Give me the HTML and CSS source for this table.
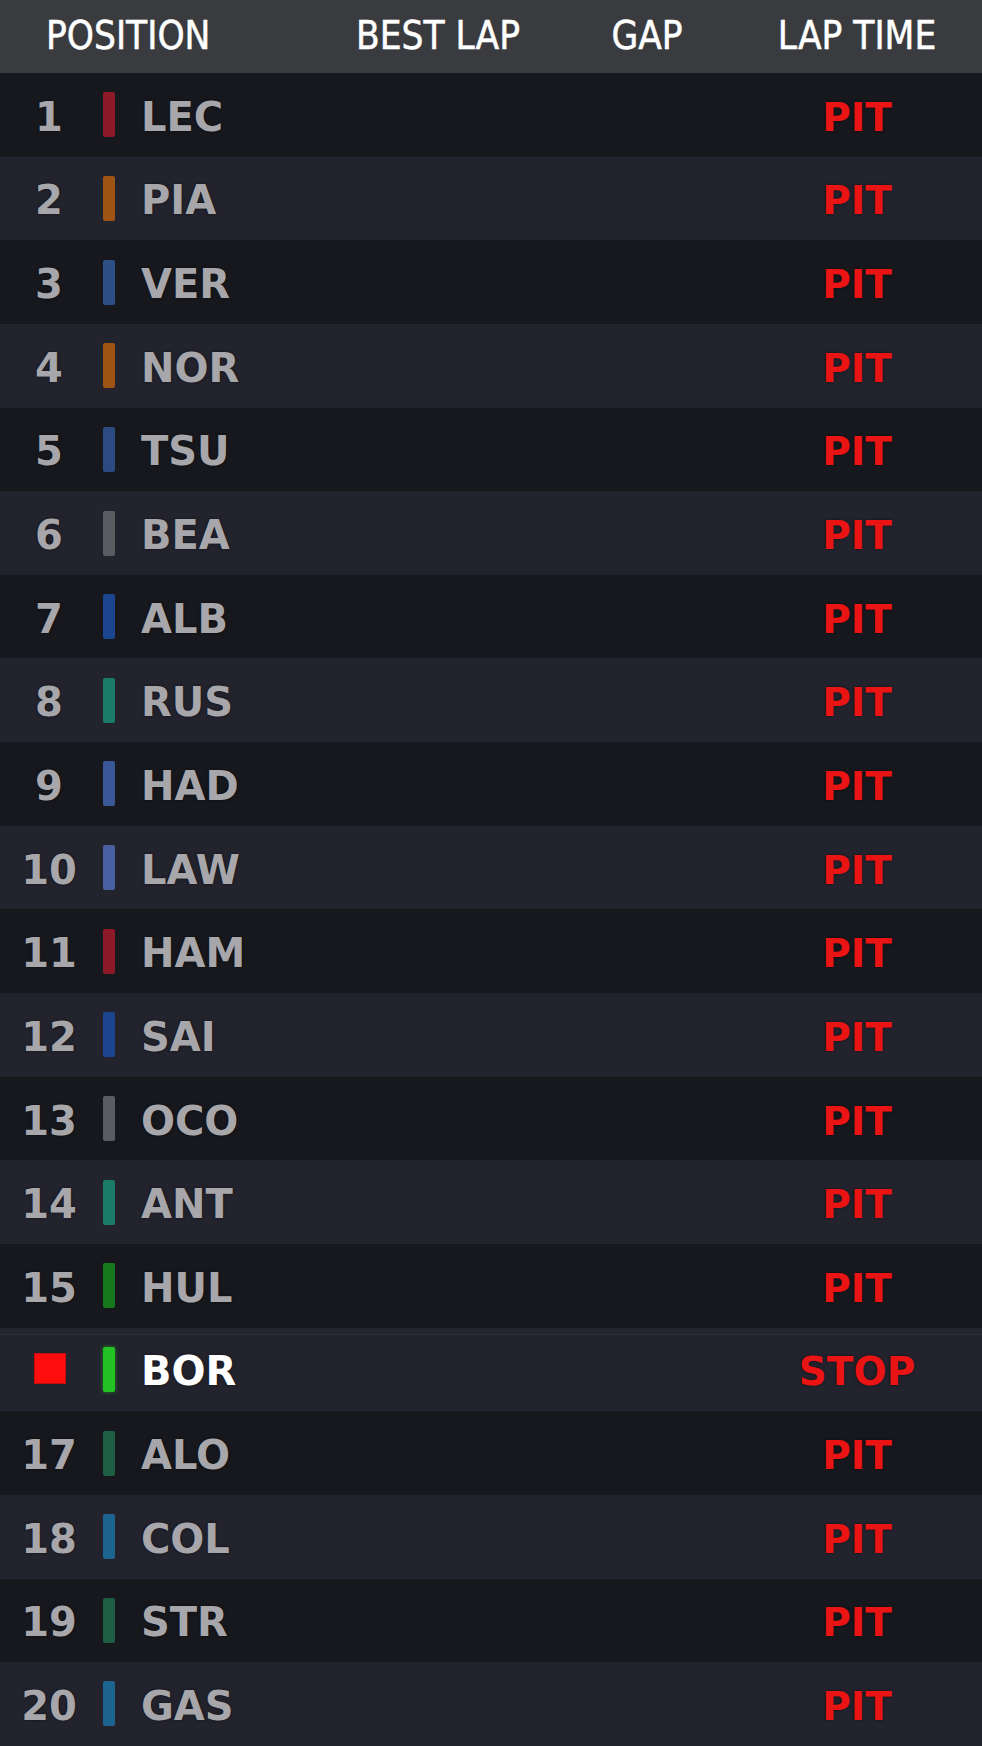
FILE: index.html
```html
<!DOCTYPE html>
<html lang="en">
<head>
<meta charset="utf-8">
<title>Timing</title>
<link rel="stylesheet" href="styles.css">
</head>
<body>
<div class="board">
  <div class="head">
    <span class="h-pos">POSITION</span>
    <span class="h-best">BEST LAP</span>
    <span class="h-gap">GAP</span>
    <span class="h-time">LAP TIME</span>
  </div>
  <div class="row"><span class="pos">1</span><span class="bar t-fer"></span><span class="name">LEC</span><span class="time">PIT</span></div>
  <div class="row"><span class="pos">2</span><span class="bar t-mcl"></span><span class="name">PIA</span><span class="time">PIT</span></div>
  <div class="row"><span class="pos">3</span><span class="bar t-rbr"></span><span class="name">VER</span><span class="time">PIT</span></div>
  <div class="row"><span class="pos">4</span><span class="bar t-mcl"></span><span class="name">NOR</span><span class="time">PIT</span></div>
  <div class="row"><span class="pos">5</span><span class="bar t-rbr2"></span><span class="name">TSU</span><span class="time">PIT</span></div>
  <div class="row"><span class="pos">6</span><span class="bar t-haas"></span><span class="name">BEA</span><span class="time">PIT</span></div>
  <div class="row"><span class="pos">7</span><span class="bar t-wil"></span><span class="name">ALB</span><span class="time">PIT</span></div>
  <div class="row"><span class="pos">8</span><span class="bar t-merc"></span><span class="name">RUS</span><span class="time">PIT</span></div>
  <div class="row"><span class="pos">9</span><span class="bar t-rb"></span><span class="name">HAD</span><span class="time">PIT</span></div>
  <div class="row"><span class="pos">10</span><span class="bar t-rb2"></span><span class="name">LAW</span><span class="time">PIT</span></div>
  <div class="row"><span class="pos">11</span><span class="bar t-fer"></span><span class="name">HAM</span><span class="time">PIT</span></div>
  <div class="row"><span class="pos">12</span><span class="bar t-wil"></span><span class="name">SAI</span><span class="time">PIT</span></div>
  <div class="row"><span class="pos">13</span><span class="bar t-haas"></span><span class="name">OCO</span><span class="time">PIT</span></div>
  <div class="row"><span class="pos">14</span><span class="bar t-merc"></span><span class="name">ANT</span><span class="time">PIT</span></div>
  <div class="row"><span class="pos">15</span><span class="bar t-sau"></span><span class="name">HUL</span><span class="time">PIT</span></div>
  <div class="row active"><span class="pos"><span class="stop-sq"></span></span><span class="bar t-sau-hi"></span><span class="name">BOR</span><span class="time">STOP</span></div>
  <div class="row"><span class="pos">17</span><span class="bar t-am"></span><span class="name">ALO</span><span class="time">PIT</span></div>
  <div class="row"><span class="pos">18</span><span class="bar t-alp"></span><span class="name">COL</span><span class="time">PIT</span></div>
  <div class="row"><span class="pos">19</span><span class="bar t-am"></span><span class="name">STR</span><span class="time">PIT</span></div>
  <div class="row"><span class="pos">20</span><span class="bar t-alp"></span><span class="name">GAS</span><span class="time">PIT</span></div>
</div>
</body>
</html>
```
FILE: styles.css
```css
html, body {
  margin: 0;
  padding: 0;
  background: #17181d;
}
.board {
  width: 982px;
  height: 1746px;
  overflow: hidden;
  display: flex;
  flex-direction: column;
}
.head {
  height: 73px;
  flex: none;
  background: #3a3b3f;
  display: flex;
  align-items: center;
  padding-left: 46px;
  padding-right: 25px;
  color: #ffffff;
  font-family: "DejaVu Sans Condensed", "DejaVu Sans", sans-serif;
  font-stretch: condensed;
  font-size: 38.4px;
  font-weight: normal;
  -webkit-text-stroke: 0.5px #ffffff;
  box-sizing: border-box;
}
.head span {
  padding-bottom: 2px;
  white-space: nowrap;
}
.h-pos { flex: 1; }
.h-best { width: 200px; text-align: center; }
.h-gap { width: 150px; text-align: center; margin-left: 34px; }
.h-time { width: 200px; text-align: center; margin-left: 35px; }

.row {
  height: 83.65px;
  flex: none;
  display: flex;
  align-items: center;
  background: #17181d;
  font-family: "DejaVu Sans", sans-serif;
  font-weight: bold;
  color: #a7a7ab;
}
.row:nth-child(odd) {
  background: #22232d;
}
.row.active {
  background: linear-gradient(#252531 0 6px, #2c2c39 6px 7px, #22232d 7px);
}
.pos {
  width: 98px;
  text-align: center;
  font-size: 40px;
  padding-top: 4px;
  display: flex;
  justify-content: center;
  text-shadow: 0 0 3px rgba(0,0,0,0.6);
}
.bar {
  width: 12px;
  height: 45px;
  margin-left: 5px;
  border-radius: 2px;
  flex: none;
}
.name {
  flex: 1;
  margin-left: 26px;
  font-size: 40px;
  padding-top: 4px;
  text-shadow: 0 0 3px rgba(0,0,0,0.6);
}
.time {
  width: 200px;
  margin-right: 25px;
  text-align: center;
  font-size: 39px;
  color: #ea1414;
  padding-top: 5px;
  text-shadow: 0 0 3px rgba(0,0,0,0.6);
}
.active .name { color: #ffffff; }
.stop-sq {
  display: block;
  width: 30px;
  height: 29px;
  margin-top: -5px;
  margin-left: 2px;
  background: #ff0d0d;
  border: 1px solid #c40c0c;
}

.t-fer { background: #8c1a28; }
.t-mcl { background: #9e5412; }
.t-rbr { background: #2e4f86; }
.t-rbr2 { background: #2c4b82; }
.t-haas { background: #5b5c61; }
.t-wil { background: #1c4590; }
.t-merc { background: #1a7b68; }
.t-rb { background: #3a5898; }
.t-rb2 { background: #4961a0; }
.t-sau { background: #167a1c; }
.t-sau-hi { background: #22c222; box-shadow: 0 0 4px rgba(40,220,40,0.5); }
.t-am { background: #1e5e42; }
.t-alp { background: #1c648f; }
```
